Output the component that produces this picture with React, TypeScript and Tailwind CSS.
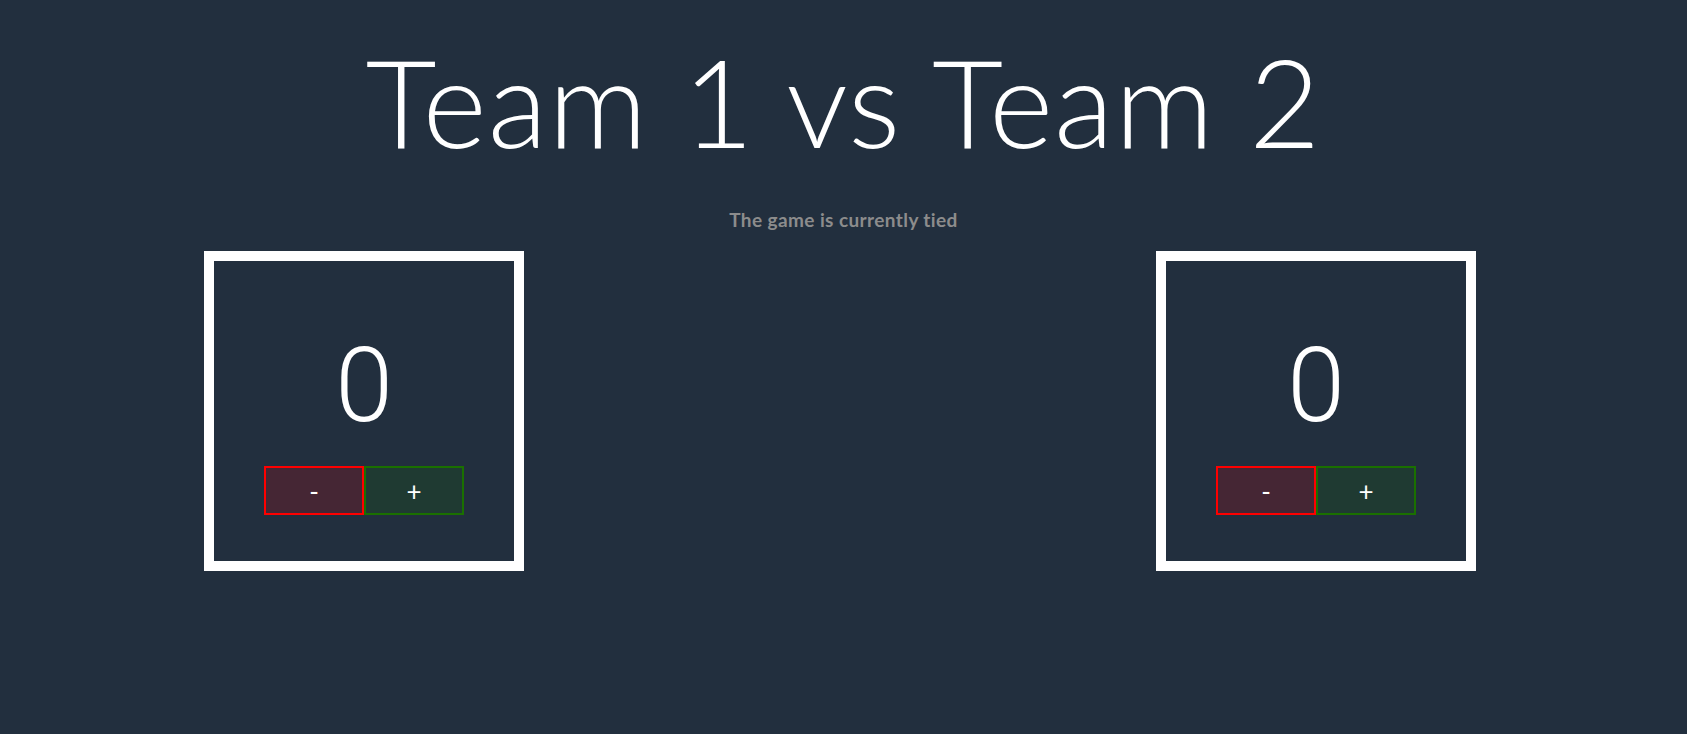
import { useState } from 'react';

function ScoreBox({ score, onChange }: { score: number; onChange: (d: number) => void }) {
  return (
    <div className="w-[320px] h-[320px] border-[10px] border-white flex flex-col items-center">
      <div
        className="mt-[73px] text-[104px] leading-none text-white font-light"
        style={{ fontFamily: 'Roboto, sans-serif' }}
      >
        {score}
      </div>
      <div className="mt-[28px] flex">
        <button
          onClick={() => onChange(-1)}
          className="w-[100px] h-[49px] border-2 border-[#ff0000] bg-[#452634] text-white text-[26px] leading-none"
        >
          -
        </button>
        <button
          onClick={() => onChange(1)}
          className="w-[100px] h-[49px] border-2 border-[#1a7000] bg-[#1f3a32] text-white text-[26px] leading-none"
        >
          +
        </button>
      </div>
    </div>
  );
}

export default function App() {
  const [team1, setTeam1] = useState(0);
  const [team2, setTeam2] = useState(0);

  const status =
    team1 === team2
      ? 'The game is currently tied'
      : team1 > team2
        ? 'Team 1 is winning'
        : 'Team 2 is winning';

  return (
    <div className="min-h-screen bg-[#222f3e] font-['Lato',sans-serif]">
      <h1 className="pt-[39px] text-center text-[123px] leading-none tracking-[1px] text-white font-light">
        Team 1 vs Team 2
      </h1>
      <p className="mt-[48px] text-center text-[19px] leading-none tracking-[0.4px] font-bold text-[#8c8c8c]">
        {status}
      </p>
      <div className="mt-[22px] flex pl-[204px] gap-[632px]">
        <ScoreBox score={team1} onChange={(d) => setTeam1((s) => s + d)} />
        <ScoreBox score={team2} onChange={(d) => setTeam2((s) => s + d)} />
      </div>
    </div>
  );
}
